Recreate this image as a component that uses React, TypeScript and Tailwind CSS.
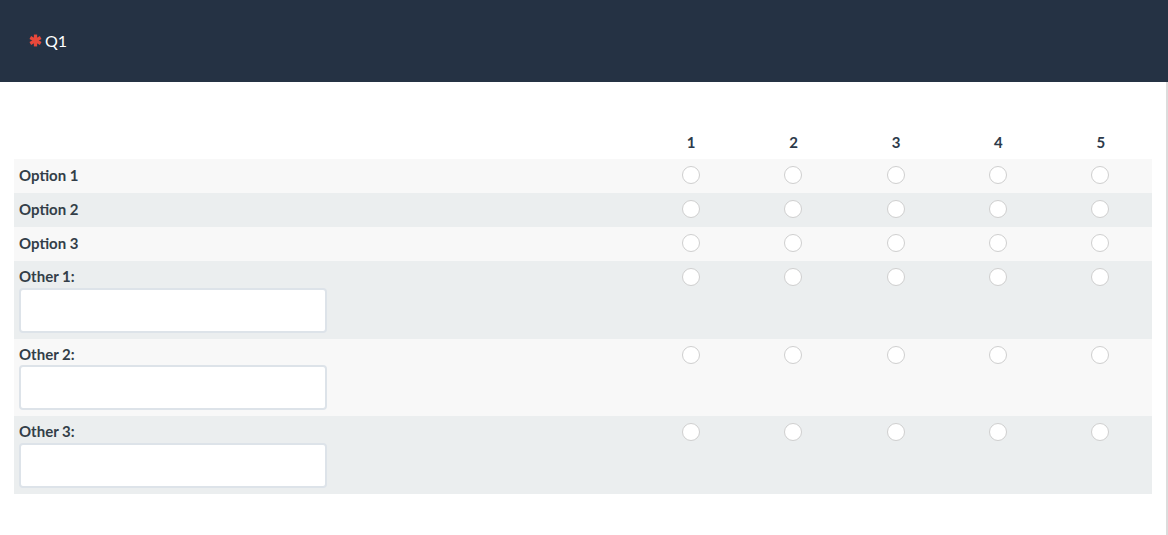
import React from "react";

const cols = [1, 2, 3, 4, 5];

function Radio() {
  return <span className="block w-[18px] h-[18px] rounded-full border border-[#cfcfcf] bg-white" />;
}

function Row({ label, other, bg }: { label: string; other?: boolean; bg: string }) {
  return (
    <div className={`flex ${bg}`}>
      <div className={`w-[626px] pl-[5px] ${other ? "pt-[5px] pb-[6px]" : "pt-[6px] pb-[8px]"}`}>
        <div className="text-[15px] leading-[20px] font-bold text-[#333e48]">{label}</div>
        {other && (
          <div className="mt-[1.5px] w-[308px] h-[45px] rounded-[4px] border-2 border-[#dde3e9] bg-white" />
        )}
      </div>
      {cols.map((c) => (
        <div key={c} className="flex-1 flex justify-center pt-[7px] pr-[1px]">
          <Radio />
        </div>
      ))}
    </div>
  );
}

export default function App() {
  return (
    <div className="w-[1168px] h-[535px] bg-white overflow-hidden" style={{ fontFamily: "Lato, 'Open Sans', sans-serif" }}>
      <div className="h-[82px] bg-[#253244] flex items-center pl-[29px] pb-[1px]">
        <svg width="13" height="13" viewBox="0 0 12 12" className="mr-[3px]">
          <g stroke="#e8483b" strokeWidth="3" strokeLinecap="butt">
            <line x1="6" y1="0.5" x2="6" y2="11.5" />
            <line x1="1.2" y1="3.25" x2="10.8" y2="8.75" />
            <line x1="1.2" y1="8.75" x2="10.8" y2="3.25" />
          </g>
        </svg>
        <span className="text-white text-[16px] leading-[20px]">Q1</span>
      </div>
      <div className="flex h-[453px]">
        <div className="flex-1 pl-[14px] pr-[14px] pt-[48px]">
          <div className="flex h-[29px]">
            <div className="w-[626px]" />
            {cols.map((c) => (
              <div key={c} className="flex-1 text-center pt-[2px] text-[15px] leading-[20px] font-bold text-[#2c3a4a]">
                {c}
              </div>
            ))}
          </div>
          <Row label="Option 1" bg="bg-[#f8f8f8]" />
          <Row label="Option 2" bg="bg-[#ebeeef]" />
          <Row label="Option 3" bg="bg-[#f8f8f8]" />
          <Row label="Other 1:" other bg="bg-[#ebeeef]" />
          <Row label="Other 2:" other bg="bg-[#f8f8f8]" />
          <Row label="Other 3:" other bg="bg-[#ebeeef]" />
        </div>
        <div className="w-[2px] bg-[#dcdcdc]" />
      </div>
    </div>
  );
}
